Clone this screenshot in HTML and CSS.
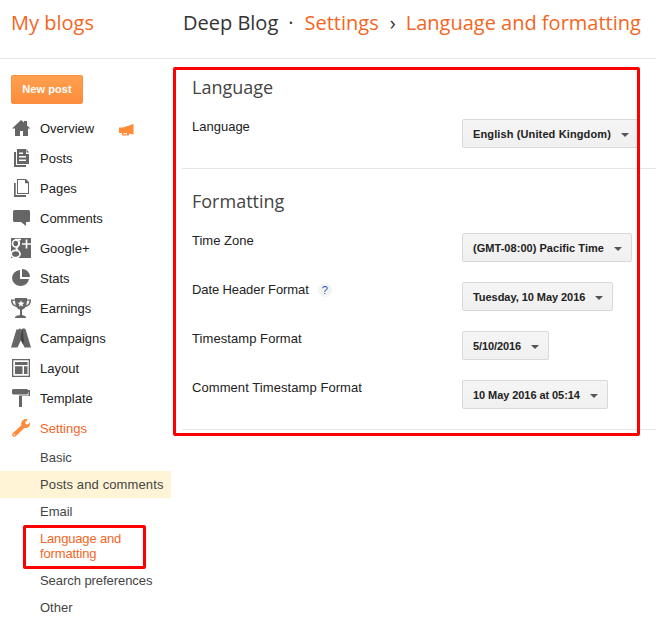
FILE: index.html
```html
<!DOCTYPE html>
<html lang="en">
<head>
<meta charset="utf-8">
<title>Language and formatting</title>
<link rel="stylesheet" href="styles.css">
</head>
<body>
<header class="header">
  <a class="home">My blogs</a>
  <nav class="crumbs"><span class="blog">Deep Blog</span><span class="dot">·</span><a class="c-settings">Settings</a><span class="arrow">›</span><a class="c-page">Language and formatting</a></nav>
</header>
<div class="body">
  <aside class="sidebar">
    <button class="new-post">New post</button>
    <ul class="menu">
      <li><svg viewBox="0 0 20 20"><path d="M1 10.500 10 2l3 2.500V3h3v4.500l3.500 3H17V18h-5v-5H9v5H4v-7.500z"/></svg><span>Overview</span>
        <svg class="horn" viewBox="0 0 15 12"><path d="M0 3.500h4L14.500 0v10.500L10 9.500V11.500H3V9H0zM4.500 9v1.200H8V9z" fill-rule="evenodd"/></svg></li>
      <li><svg viewBox="0 0 20 20"><path d="M3 4h2v13h10v2H3zM6 1h9v5h3v10H6zM15.500 1l2.500 3.500h-2.500zM8 4.500V6h4V4.500zM8 8v1.500h7V8zM8 11.500V13h7v-1.500z" fill-rule="evenodd"/></svg><span>Posts</span></li>
      <li><svg viewBox="0 0 20 20"><path d="M3 5h1.700v12H15v2H3zM6 1h9l3 3v12H6zM7 2v13h10V5.200h-3V2z" fill-rule="evenodd"/></svg><span>Pages</span></li>
      <li><svg viewBox="0 0 20 20"><path d="M3.500 2h14Q19 2 19 3.500v9q0 1.500-1.500 1.500H15v4l-5-4H3.500Q2 14 2 12.500v-9Q2 2 3.500 2z"/></svg><span>Comments</span></li>
      <li><svg viewBox="0 0 20 20"><path d="M0 0h20v20H0z"/><g class="cut-line"><ellipse cx="4.700" cy="5.500" rx="3.200" ry="3.500"/><path d="M4 1.500h6M7.500 2.500q2 3.500-1 6.500Q4 10.500 7 12"/><ellipse cx="4.600" cy="16" rx="4.400" ry="3.600"/><path d="M11 6h9M15.500 1.500v9"/></g></svg><span>Google+</span></li>
      <li><svg viewBox="0 0 20 20"><path d="M9 2v9h9A8.500 8 0 1 1 9 2zM11 1a8 8 0 0 1 8 8h-8z"/></svg><span>Stats</span></li>
      <li><svg viewBox="0 0 20 20"><path d="M4 0h12v1.500h4v2Q19 8 14.500 9 13.500 11 11 11.800V17q3 .5 4 2v1H4v-1q1-1.500 5-2v-5.200Q6.500 11 5.500 9 1 8 0 3.500v-2h4zM1.300 2.800Q2 6.500 4.700 7.500L4 2.800zM16 2.800l-.7 4.700Q18 6.500 18.700 2.800zM10 2.200 9.100 4.600 6.500 4.700l2 1.500L7.800 8.700 10 7.300l2.200 1.400-.7-2.500 2-1.500-2.600-.1z" fill-rule="evenodd"/></svg><span>Earnings</span></li>
      <li><svg viewBox="0 0 20 20"><path d="M5.500 1.200 7 1.700 9 .2l1 1.200L12.500.2l2 .8L20 19.500h-6.500L10 12 6.500 19.500H0z"/><path class="shade" d="M12 .5 9.800 7v5l2.200 4.500 1-4L12.300 8z"/></svg><span>Campaigns</span></li>
      <li><svg viewBox="0 0 20 20"><path d="M1 1h18v18H1zM2.300 2.300v15.400h15.400V2.300zM4 4h12.500v3H4zM4 8.300h7.500V16H4zM13 8.300h3.500V16H13z" fill-rule="evenodd"/></svg><span>Layout</span></li>
      <li><svg viewBox="0 0 20 20"><path d="M2 1h14l1 1h2v6h-8v11H8V7.500h9.500V4H17v1.500L16 6.500H2L1 5.500V2z"/></svg><span>Template</span></li>
      <li class="active"><svg viewBox="0 0 20 20"><path d="M17 1.200 14.300 4l.4 2.200 2.200.3L19 4.300q.6 3-1.500 4.700-1.800 1.300-4 .7L5.300 17.800q-1.300 1.200-2.800 1-1.700-.6-1.300-2.500.1-.8 1-1.600l8.300-7.500Q9.500 4.500 11.500 2.500 14 .5 17 1.200z"/><circle class="cut" cx="3.300" cy="16.700" r=".8"/></svg><span>Settings</span></li>
    </ul>
    <ul class="submenu">
      <li>Basic</li>
      <li class="hover"><span class="w-posts">Posts and comments</span></li>
      <li>Email</li>
      <li class="current">Language and<br>formatting</li>
      <li><span class="w-search">Search preferences</span></li>
      <li>Other</li>
    </ul>
  </aside>
  <main class="main">
    <section class="first">
      <h2>Language</h2>
      <div class="row"><label>Language</label><button class="select s-lang">English (United Kingdom)</button></div>
    </section>
    <section>
      <h2>Formatting</h2>
      <div class="row"><label>Time Zone</label><button class="select s-zone">(GMT-08:00) Pacific Time</button></div>
      <div class="row"><label><span class="w-date">Date Header Format</span> <span class="help">?</span></label><button class="select s-date">Tuesday, 10 May 2016</button></div>
      <div class="row"><label class="w-stamp">Timestamp Format</label><button class="select s-stamp">5/10/2016</button></div>
      <div class="row"><label class="w-stamp">Comment Timestamp Format</label><button class="select s-comment">10 May 2016 at 05:14</button></div>
    </section>
  </main>
</div>
<div class="mark mark-main"></div>
<div class="mark mark-nav"></div>
</body>
</html>
```

FILE: styles.css
```css
* { box-sizing: border-box; }
body { margin: 0; height: 637px; position: relative; overflow: hidden; background: #fff; color: #222; font: 13px/15px "Liberation Sans", Arial, sans-serif; }
ul { list-style: none; margin: 0; padding: 0; }
.header { display: flex; height: 59px; border-bottom: 1px solid #e6e6e6; padding-left: 11px; font: 20px/27px "Open Sans", sans-serif; padding-top: 9px; color: #333; white-space: nowrap; }
.header a { color: #f3661f; }
.home { width: 172px; }
.crumbs { display: flex; }
.dot { margin: 0 11px 0 10px; }
.arrow { margin: 0 10px 0 11px; }
.body { display: flex; }
.sidebar { width: 171px; flex: none; padding-top: 16px; }
.new-post { display: block; width: 72px; height: 29px; margin: 0 0 9px 11px; padding: 0; border: 1px solid #fb8f3d; border-radius: 2px; background: linear-gradient(#ffa04f, #fb8e3c); color: #fff; font: bold 11px/27px "Liberation Sans", Arial, sans-serif; letter-spacing: .1px; }
.menu li { display: flex; align-items: center; height: 30px; padding-left: 11px; }
.menu svg { width: 20px; height: 20px; margin-right: 9px; fill: #666; flex: none; }
.menu .horn { width: 15px; height: 12px; margin: 3px 0 0 25px; fill: #ff8a38; }
.menu .cut-line { fill: none; stroke: #fff; stroke-width: 1.7; }
.menu .cut { fill: #fff; }
.menu .shade { fill: #444; }
.menu .active { color: #f3661f; }
.menu .active svg { fill: #ff8a38; }
.submenu { padding-top: 1px; color: #444; }
.submenu li { padding: 6px 0 6px 40px; white-space: nowrap; }
.submenu .hover { background: #fff4d6; }
.submenu .current { color: #f3661f; letter-spacing: -.15px; }
.submenu .current::first-line { letter-spacing: -.17px; }
.w-posts { letter-spacing: .12px; }
.w-search { letter-spacing: -.06px; }
.w-date { letter-spacing: -.1px; }
.w-stamp { letter-spacing: .07px; }
.main { flex: 1; padding-left: 11px; }
section { height: 261px; border-bottom: 1px solid #e6e6e6; padding: 19px 0 0 10px; }
section.first { height: 110px; padding-top: 15px; }
h2 { margin: 0; height: 45px; font: 18px/27px "Open Sans", sans-serif; color: #444; }
.row { display: flex; height: 49px; }
.row label { width: 270px; display: flex; height: 15px; }
.select { display: flex; align-items: center; justify-content: space-between; height: 29px; padding: 1px 10px 0; border: 1px solid #d9d9d9; border-radius: 2px; background: linear-gradient(#f5f5f5, #f0f0f0); color: #222; font: bold 11px/26px "Liberation Sans", Arial, sans-serif; white-space: nowrap; }
.select::after { content: ""; margin-right: -1px; margin-top: 1px; border: 4px solid transparent; border-top-color: #555; border-bottom: 0; }
.s-lang { width: 177px; letter-spacing: .12px; }
.s-zone { width: 170px; letter-spacing: .04px; }
.s-date { width: 151px; letter-spacing: -.05px; }
.s-stamp { width: 87px; letter-spacing: -.1px; }
.s-comment { width: 146px; letter-spacing: -.07px; }
.help { width: 14px; height: 14px; margin: 1px 0 0 9px; border-radius: 50%; background: #f3f3f3; color: #2a56c6; font-size: 11px; line-height: 14px; text-align: center; }
.mark { position: absolute; border: 3px solid #f00; border-radius: 2px; }
.mark-main { left: 173px; top: 67px; width: 467px; height: 369px; }
.mark-nav { left: 23px; top: 525px; width: 123px; height: 44px; }
```
